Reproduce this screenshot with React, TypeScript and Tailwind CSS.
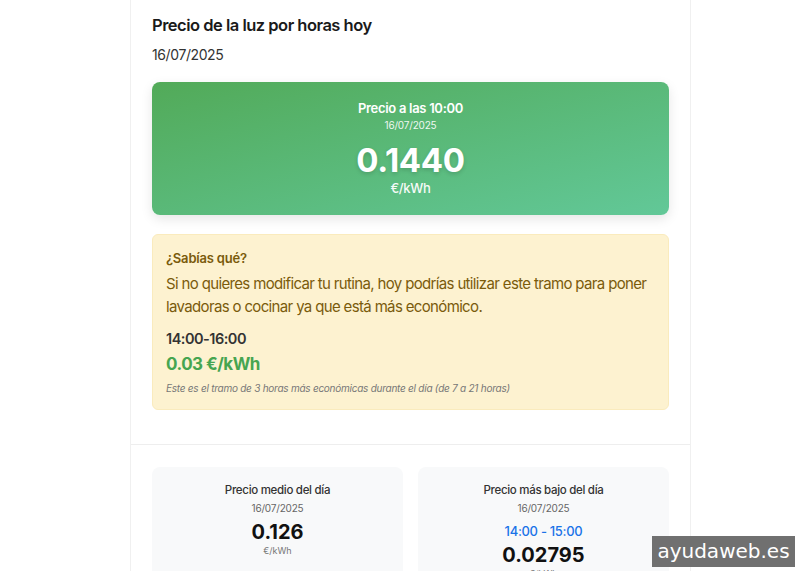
import React from 'react';

const font = { fontFamily: 'Inter, "Noto Sans", sans-serif' };

const StatCard = ({ title, children }: { title: string; children: React.ReactNode }) => (
  <div className="flex-1 bg-[#f8f9fa] rounded-lg pt-[15px] pb-4 flex flex-col items-center">
    <h3 className="text-[11.5px] leading-[16px] font-medium tracking-[-0.3px] text-[#333]">{title}</h3>
    <p className="mt-[3px] text-[10px] leading-[14px] tracking-[-0.2px] text-[#666]">16/07/2025</p>
    {children}
  </div>
);

export default function App() {
  return (
    <div className="w-[800px] h-[571px] overflow-hidden bg-white relative" style={font}>
      <div className="ml-[130px] w-[561px] border-x border-[#f0f0f0] bg-white">
        {/* Cabecera */}
        <div className="px-[21px] pt-[13px] pb-[34px] border-b border-[#eeeeee]">
          <h1 className="text-[16.5px] leading-[24px] font-semibold tracking-[-0.5px] text-[#1a1a1a]">Precio de la luz por horas hoy</h1>
          <p className="mt-[8px] text-[14px] leading-[20px] tracking-[-0.4px] text-[#333]">16/07/2025</p>

          <div className="mt-[17px] h-[133px] rounded-lg bg-gradient-to-br from-[#52aa58] to-[#62c898] shadow-[0_4px_12px_rgba(0,0,0,0.1)] flex flex-col items-center pt-[17px] text-white">
            <p className="text-[13px] leading-[18px] font-semibold tracking-[-0.3px]">Precio a las 10:00</p>
            <p className="mt-[1px] text-[10px] leading-[14px] tracking-[-0.2px] opacity-90">16/07/2025</p>
            <p className="mt-[8px] text-[33px] leading-[40px] font-bold tracking-[-0.3px] [text-shadow:0_2px_4px_rgba(0,0,0,0.15)]">0.1440</p>
            <p className="mt-[-1px] text-[13px] leading-[18px] font-medium tracking-[-0.3px] opacity-95">€/kWh</p>
          </div>

          <div className="mt-[19px] rounded-md bg-[#fdf2d0] border border-[#faebbd] px-[13px] pt-[14px] pb-[14px] text-[#7a5b0c]">
            <p className="text-[13px] leading-[18px] font-semibold tracking-[-0.2px]">¿Sabías qué?</p>
            <p className="mt-[5px] text-[15px] leading-[23px] tracking-[-0.65px]">
              Si no quieres modificar tu rutina, hoy podrías utilizar este tramo para poner lavadoras o cocinar ya que está más económico.
            </p>
            <p className="mt-[11px] text-[14.5px] leading-[20px] font-semibold tracking-[-0.5px] text-[#333]">14:00-16:00</p>
            <p className="mt-[3px] text-[17px] leading-[24px] font-bold tracking-[-0.5px] text-[#46a550]">0.03 €/kWh</p>
            <p className="mt-[5px] text-[10px] leading-[14px] italic tracking-[-0.25px] text-[#777]">
              Este es el tramo de 3 horas más económicas durante el día (de 7 a 21 horas)
            </p>
          </div>
        </div>

        {/* Resumen */}
        <div className="px-[21px] pt-[22px] flex gap-[15px]">
          <StatCard title="Precio medio del día">
            <p className="mt-[4px] text-[20px] leading-[26px] font-bold text-[#111]">0.126</p>
            <p className="text-[9px] leading-[12px] text-[#777]">€/kWh</p>
          </StatCard>
          <StatCard title="Precio más bajo del día">
            <p className="mt-[7px] text-[13px] leading-[18px] font-medium tracking-[-0.3px] text-[#1a73e8]">14:00 - 15:00</p>
            <p className="mt-[2px] text-[20px] leading-[26px] font-bold text-[#111]">0.02795</p>
            <p className="text-[9px] leading-[12px] text-[#777]">€/kWh</p>
          </StatCard>
        </div>
      </div>

      <div
        className="absolute left-[652px] top-[536px] h-[31px] w-[143px] bg-[#707070] text-white text-[20px] leading-[31px] text-center"
        style={{ fontFamily: '"DejaVu Sans", sans-serif' }}
      >
        ayudaweb.es
      </div>
    </div>
  );
}
